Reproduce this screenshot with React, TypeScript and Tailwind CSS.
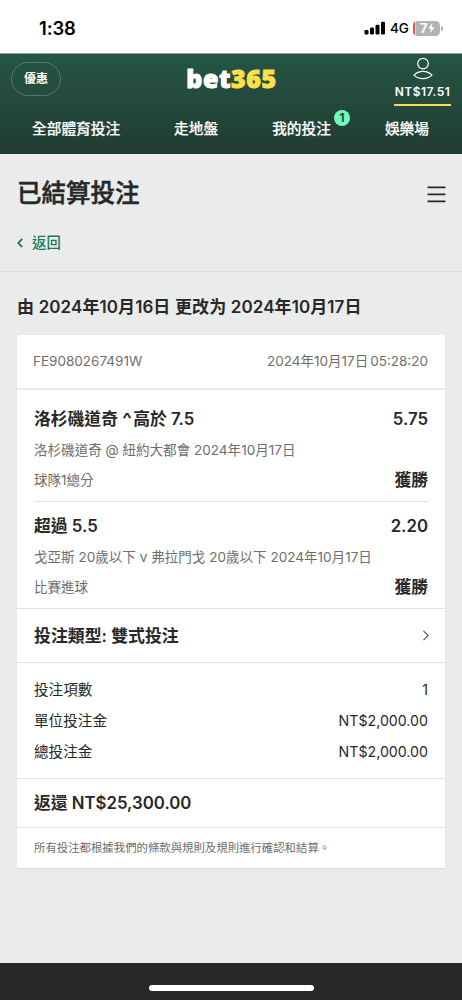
import React from 'react';

interface Selection {
  name: React.ReactNode;
  odds: string;
  fixture: string;
  market: string;
  result: string;
}

const selections: Selection[] = [
  {
    name: <>洛杉磯道奇 <span className="mr-[1px] inline-block origin-left scale-x-125 pr-[2px]">^</span>高於 7.5</>,
    odds: '5.75',
    fixture: '洛杉磯道奇 @ 紐約大都會 2024年10月17日',
    market: '球隊1總分',
    result: '獲勝'
  },
  {
    name: '超過 5.5',
    odds: '2.20',
    fixture: '戈亞斯 20歲以下 v 弗拉門戈 20歲以下 2024年10月17日',
    market: '比賽進球',
    result: '獲勝'
  }
];

const stakes = [
  { label: '投注項數', value: '1' },
  { label: '單位投注金', value: 'NT$2,000.00' },
  { label: '總投注金', value: 'NT$2,000.00' }
];

const StatusBar: React.FC = () => (
  <div className="flex h-[53px] items-center justify-between bg-white pl-[39px] pr-[19px] pt-[3px] text-black">
    <span className="text-[18.4px] font-semibold leading-6 tracking-[-0.1px]">1:38</span>
    <div className="flex items-center">
      <svg width="22" height="14" viewBox="0 0 22 14" fill="currentColor">
        <rect x="0.5" y="9" width="4" height="4.5" rx="1.2" />
        <rect x="6" y="6.6" width="4" height="6.9" rx="1.2" />
        <rect x="11.5" y="3.8" width="4" height="9.7" rx="1.2" />
        <rect x="17" y="0.8" width="4" height="12.7" rx="1.2" />
      </svg>
      <span className="ml-[4px] w-[19px] whitespace-nowrap text-[13.5px] font-medium leading-4 tracking-[-0.2px]">4G</span>
      <div className="ml-[4px] flex h-[15px] w-[27px] items-center overflow-hidden rounded-[4.5px] bg-[#b3b3b3] text-white">
        <div className="h-full w-[2px] bg-[#e8584d]" />
        <div className="h-full w-px bg-[#e9dcdb]" />
        <span className="ml-[4px] text-[13px] font-bold leading-[15px]">7</span>
        <svg width="7" height="10" viewBox="0 0 7 10" fill="currentColor">
          <path d="M4.6 0 0.2 5.6H3.1L2.2 10 6.8 4.2H3.8Z" />
        </svg>
      </div>
      <div className="ml-px h-[5px] w-[2px] rounded-r-full bg-[#b3b3b3]" />
    </div>
  </div>
);

const Header: React.FC = () => (
  <header className="h-[101px] border-t border-[#8fa89d] bg-linear-to-b from-[#255644] to-[#213b33] text-white">
    <div className="flex h-[52px] justify-between pl-[11px] pr-[11px]">
      <button className="mt-2 flex h-[34px] w-[50px] items-center justify-center rounded-full border border-[#53796b] text-[12px] font-bold leading-4">
        優惠
      </button>
      <div className="ml-[8px] mt-[8px] font-['Open_Sans','Noto_Sans',sans-serif] text-[25px] font-extrabold leading-8 tracking-[0.6px] [-webkit-text-stroke:0.9px]">
        bet<span className="text-[#ffe04b]">365</span>
      </div>
      <div className="flex w-[57px] flex-col items-center border-b-2 border-[#f9dc56]">
        <svg className="mt-[3px] shrink-0" width="20" height="23" viewBox="0 0 20 23" fill="none" stroke="currentColor" strokeWidth="1.2">
          <circle cx="10" cy="6.6" r="5.3" />
          <path d="M1 18.2C3.4 15.6 6.3 14.4 10 14.4S16.6 15.6 19 18.2C16.6 20.6 13.7 21.7 10 21.7S3.4 20.6 1 18.2Z" strokeLinejoin="round" />
        </svg>
        <span className="mt-[4px] whitespace-nowrap text-[12px] font-semibold leading-4 tracking-[0.5px]">NT$17.51</span>
      </div>
    </div>
    <nav className="flex h-[46px] items-center justify-between pl-[32px] pr-[33px] text-[14.7px] font-medium leading-6 [-webkit-text-stroke:0.2px]">
      <span>全部體育投注</span>
      <span>走地盤</span>
      <span className="relative">
        我的投注
        <span className="absolute -right-[19px] -top-[7px] flex h-4 w-4 items-center justify-center rounded-full bg-[#6dfcb9] text-[12px] font-semibold leading-4 text-[#213f35]">
          1
        </span>
      </span>
      <span>娛樂場</span>
    </nav>
  </header>
);

const SelectionRow: React.FC<{ selection: Selection }> = ({ selection }) => (
  <div className="pb-[9px] pt-3">
    <div className="flex justify-between text-[16.8px] font-semibold leading-6">
      <span>{selection.name}</span>
      <span>{selection.odds}</span>
    </div>
    <div className="mt-[7px] whitespace-nowrap text-[13.55px] leading-6 text-[#6e6e6e]">{selection.fixture}</div>
    <div className="mt-[6px] flex items-center justify-between leading-6">
      <span className="text-[13.5px] text-[#6e6e6e]">{selection.market}</span>
      <span className="text-[16.8px] font-bold">{selection.result}</span>
    </div>
  </div>
);

const BetCard: React.FC = () => (
  <section className="mx-[17px] h-[533px] rounded-[2px] bg-white text-[#282828] shadow-[0_1px_1px_#d5d8d7]">
    <div className="flex h-[55px] items-center justify-between border-b-2 border-[#eaeceb] px-[17px] text-[13.5px] text-[#6e6e6e]">
      <span className="-ml-px">FE9080267491W</span>
      <span>2024年10月17日<span className="ml-[2px]">05:28:20</span></span>
    </div>
    <div className="divide-y divide-[#dfe1e0] px-[17px] pt-[5px]">
      {selections.map(selection => (
        <SelectionRow key={selection.odds} selection={selection} />
      ))}
    </div>
    <div className="flex h-[55px] items-center justify-between border-y border-[#dfe1e0] pl-[17px] pr-4">
      <span className="text-[16.9px] font-semibold leading-6">投注類型: 雙式投注</span>
      <svg width="6" height="11" viewBox="0 0 6 11" fill="none" stroke="#505050" strokeWidth="1.1">
        <path d="M0.5 0.8 5.2 5.5 0.5 10.2" />
      </svg>
    </div>
    <div className="h-[115px] px-[17px] pt-[11px]">
      {stakes.map(({ label, value }) => (
        <div key={label} className="flex h-[31.3px] items-center justify-between leading-6">
          <span className="text-[14.6px]">{label}</span>
          <span className="text-[14.2px]">{value}</span>
        </div>
      ))}
    </div>
    <div className="flex h-[50px] items-center border-y border-[#dfe1e0] px-[17px] pt-[2px] text-[16.8px] font-semibold">
      返還 NT$25,300.00
    </div>
    <div className="flex h-10 items-center px-[17px] pt-px text-[11.4px] text-[#6e6e6e]">
      所有投注都根據我們的條款與規則及規則進行確認和結算。
    </div>
  </section>
);

const App: React.FC = () => {
  return (
    <div className="flex h-[1000px] w-[462px] flex-col overflow-hidden bg-[#eaeceb] font-['Inter','Noto_Sans_CJK_TC',sans-serif]">
      <StatusBar />
      <Header />

      {/* Page heading */}
      <div className="h-[118px] border-b border-[#d9dcdb] pl-[17px] pr-4 text-[#282828]">
        <div className="flex h-20 items-center justify-between">
          <h1 className="-mt-[3px] text-[24.5px] font-medium leading-8 [-webkit-text-stroke:0.5px]">已結算投注</h1>
          <svg width="19" height="17" viewBox="0 0 19 17" stroke="#282828" strokeWidth="1.7">
            <path d="M0.5 1.4H18.5M0.5 8.4H18.5M0.5 15.4H18.5" />
          </svg>
        </div>
        <button className="-mt-[3px] flex items-center text-[14.4px] font-medium leading-6 text-[#23785a]">
          <svg className="mr-[9px]" width="6" height="10" viewBox="0 0 6 10" fill="none" stroke="currentColor" strokeWidth="1.8">
            <path d="M5.2 1 1.2 5 5.2 9" />
          </svg>
          返回
        </button>
      </div>

      <h2 className="flex h-[63px] items-center whitespace-nowrap px-[17px] pt-[9px] text-[17px] font-semibold tracking-[0.08px] text-[#282828] [word-spacing:0.2px]">
        由 2024年10月16日 更改为 2024年10月17日
      </h2>
      <BetCard />

      {/* Home indicator area */}
      <div className="mt-auto flex h-[37px] items-end justify-center bg-[#282828] pb-[9px]">
        <div className="h-[6px] w-[165px] rounded-full bg-white" />
      </div>
    </div>
  );
};

export default App;
